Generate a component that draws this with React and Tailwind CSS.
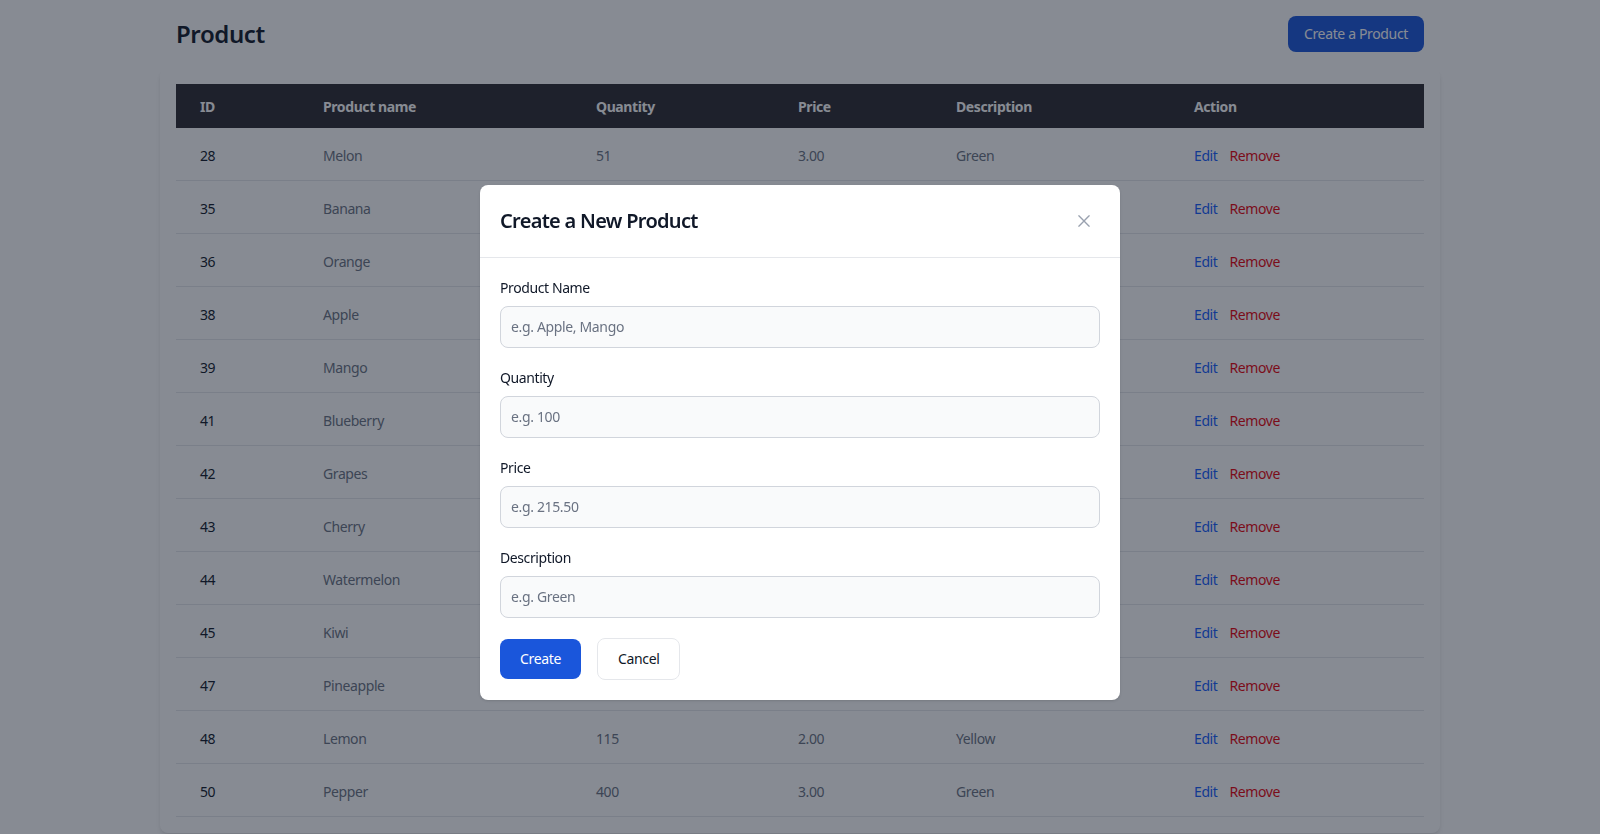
import React from "react";

const rows = [
  ["28", "Melon", "51", "3.00", "Green"],
  ["35", "Banana", "120", "1.50", "Yellow"],
  ["36", "Orange", "80", "2.50", "Orange"],
  ["38", "Apple", "200", "2.00", "Red"],
  ["39", "Mango", "60", "4.00", "Yellow"],
  ["41", "Blueberry", "300", "5.00", "Blue"],
  ["42", "Grapes", "150", "3.50", "Purple"],
  ["43", "Cherry", "90", "6.00", "Red"],
  ["44", "Watermelon", "30", "8.00", "Green"],
  ["45", "Kiwi", "75", "1.20", "Brown"],
  ["47", "Pineapple", "40", "4.50", "Yellow"],
  ["48", "Lemon", "115", "2.00", "Yellow"],
  ["50", "Pepper", "400", "3.00", "Green"],
];

function Field({ label, placeholder }) {
  return (
    <div className="mb-5">
      <label className="block mb-2 text-sm leading-5 text-gray-900">{label}</label>
      <input
        type="text"
        placeholder={placeholder}
        className="block w-full rounded-lg border border-gray-300 bg-gray-50 p-2.5 text-sm leading-5 tracking-[-0.025em] text-gray-900 placeholder:text-gray-500 outline-none"
      />
    </div>
  );
}

const td = "border-b border-gray-200 px-6 pt-[18px] pb-[14px] leading-5";
const th = "px-6 pt-[13px] pb-[11px] font-bold leading-5";

export default function App() {
  return (
    <div className="relative min-h-[834px] bg-white font-['Noto_Sans',sans-serif] tracking-[-0.025em] text-gray-900">
      <div className="mx-auto max-w-7xl pt-4">
        <div className="flex items-center justify-between px-4">
          <h1 className="text-2xl leading-8 font-semibold text-gray-900">Product</h1>
          <button className="rounded-lg bg-[#1a56db] px-4 py-2 text-sm leading-5 tracking-[-0.025em] text-white">
            Create a Product
          </button>
        </div>
        <div className="mt-4 rounded-lg bg-white p-4 shadow-md">
          <table className="w-full table-fixed border-separate border-spacing-0 text-left text-sm">
            <colgroup>
              <col className="w-[123px]" />
              <col className="w-[273px]" />
              <col className="w-[202px]" />
              <col className="w-[158px]" />
              <col className="w-[238px]" />
              <col />
            </colgroup>
            <thead className="bg-[#2c2a30] text-white">
              <tr>
                <th className={th}>ID</th>
                <th className={th}>Product name</th>
                <th className={th}>Quantity</th>
                <th className={th}>Price</th>
                <th className={th}>Description</th>
                <th className={th}>Action</th>
              </tr>
            </thead>
            <tbody>
              {rows.map((r) => (
                <tr key={r[0]}>
                  <td className={td + " text-gray-900"}>{r[0]}</td>
                  <td className={td + " text-gray-500"}>{r[1]}</td>
                  <td className={td + " text-gray-500"}>{r[2]}</td>
                  <td className={td + " text-gray-500"}>{r[3]}</td>
                  <td className={td + " text-gray-500"}>{r[4]}</td>
                  <td className={td}>
                    <div className="flex gap-3">
                      <span className="text-blue-600">Edit</span>
                      <span className="text-red-600">Remove</span>
                    </div>
                  </td>
                </tr>
              ))}
            </tbody>
          </table>
        </div>
      </div>

      <div className="fixed inset-0 flex justify-center bg-gray-900/50 pt-[185px]">
        <div className="h-fit w-[640px] rounded-lg bg-white shadow-sm">
          <div className="flex items-center justify-between border-b border-gray-200 p-5">
            <h3 className="text-xl leading-8 font-semibold tracking-[-0.035em] text-gray-900">Create a New Product</h3>
            <button className="inline-flex h-8 w-8 items-center justify-center rounded-lg text-gray-400">
              <svg className="h-3 w-3" viewBox="0 0 14 14" fill="none">
                <path d="m1 1 6 6m0 0 6 6M7 7l6-6M7 7l-6 6" stroke="currentColor" strokeWidth="1.6" strokeLinecap="round" strokeLinejoin="round" />
              </svg>
            </button>
          </div>
          <div className="px-5 pt-5 pb-5">
            <Field label="Product Name" placeholder="e.g. Apple, Mango" />
            <Field label="Quantity" placeholder="e.g. 100" />
            <Field label="Price" placeholder="e.g. 215.50" />
            <Field label="Description" placeholder="e.g. Green" />
            <div className="flex items-center gap-4">
              <button className="rounded-lg bg-[#1a56db] px-5 py-2.5 text-sm leading-5 tracking-[-0.025em] text-white">Create</button>
              <button className="rounded-lg border border-gray-200 bg-white px-5 py-2.5 text-sm leading-5 tracking-[-0.025em] text-gray-900">Cancel</button>
            </div>
          </div>
        </div>
      </div>
    </div>
  );
}
